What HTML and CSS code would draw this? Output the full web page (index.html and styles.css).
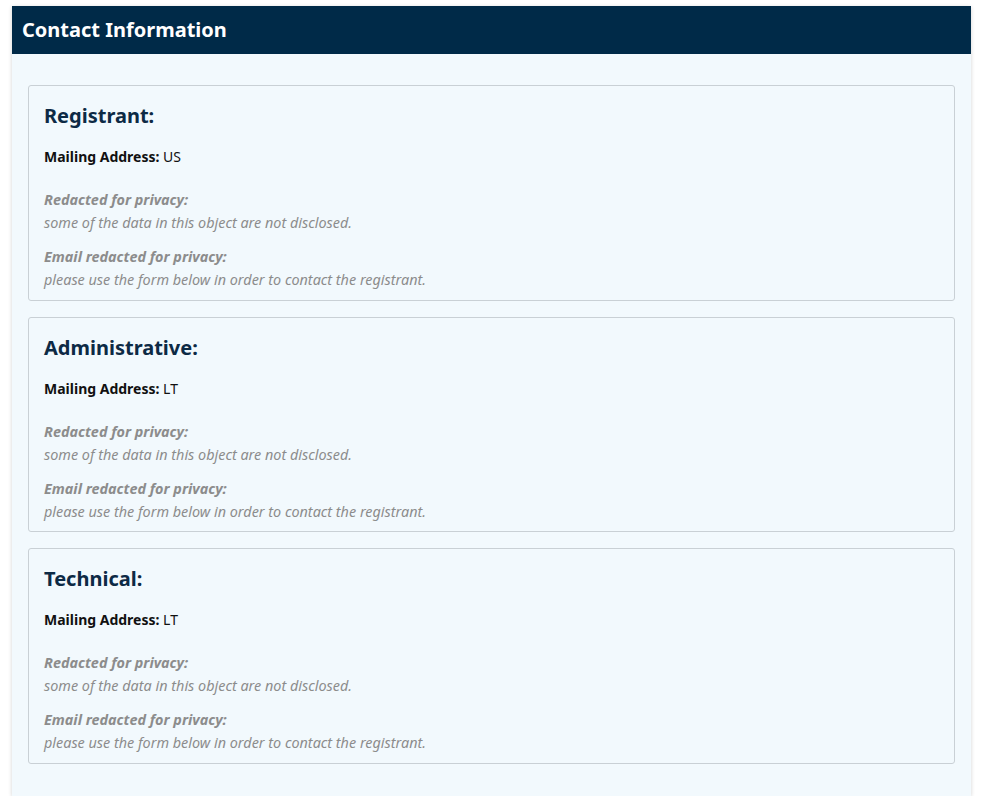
FILE: index.html
```html
<!DOCTYPE html>
<html>
<head lang="en">
  <meta charset="UTF-8">
  <title>Contact Information</title>
  <link rel="stylesheet" href="styles.css">
</head>
<body>
  <div class="panel">
    <div class="panelHeader">Contact Information</div>
    <div class="panelBody">
      <div class="contact">
        <h3 class="contactTitle">Registrant:</h3>
        <p class="contactAddress"><b>Mailing Address:</b> US</p>
        <div class="redacted">
          <p class="redactedLabel">Redacted for privacy:</p>
          <p class="redactedText">some of the data in this object are not disclosed.</p>
        </div>
        <div class="redacted">
          <p class="redactedLabel">Email redacted for privacy:</p>
          <p class="redactedText">please use the form below in order to contact the registrant.</p>
        </div>
      </div>
      <div class="contact">
        <h3 class="contactTitle">Administrative:</h3>
        <p class="contactAddress"><b>Mailing Address:</b> LT</p>
        <div class="redacted">
          <p class="redactedLabel">Redacted for privacy:</p>
          <p class="redactedText">some of the data in this object are not disclosed.</p>
        </div>
        <div class="redacted">
          <p class="redactedLabel">Email redacted for privacy:</p>
          <p class="redactedText">please use the form below in order to contact the registrant.</p>
        </div>
      </div>
      <div class="contact">
        <h3 class="contactTitle">Technical:</h3>
        <p class="contactAddress"><b>Mailing Address:</b> LT</p>
        <div class="redacted">
          <p class="redactedLabel">Redacted for privacy:</p>
          <p class="redactedText">some of the data in this object are not disclosed.</p>
        </div>
        <div class="redacted">
          <p class="redactedLabel">Email redacted for privacy:</p>
          <p class="redactedText">please use the form below in order to contact the registrant.</p>
        </div>
      </div>
    </div>
  </div>
</body>
</html>
```

FILE: styles.css
```css
body {
  margin: 0;
  padding: 6px 15px 0 12px;
  background: #fff;
  font-family: "Noto Sans", sans-serif;
}
.panel {
  background: #f2f9fd;
  box-shadow: 0 1px 4px rgba(0, 0, 0, 0.18);
}
.panelHeader {
  background: #002a48;
  color: #fff;
  font-weight: bold;
  font-size: 20px;
  height: 48px;
  line-height: 48px;
  padding-left: 10px;
}
.panelBody {
  padding: 31px 16px 32px 16px;
  display: flex;
  flex-direction: column;
  gap: 16px;
}
.contact {
  border: 1px solid #c9d0d5;
  border-radius: 3px;
  padding: 16px 15px 8.5px 15px;
}
.contactTitle {
  margin: 0 0 16px 0;
  font-size: 20px;
  line-height: 28px;
  color: #0d2a45;
}
.contactAddress {
  margin: 0 0 20px 0;
  font-size: 14px;
  line-height: 22px;
  color: #111;
}
.redacted {
  margin-bottom: 11px;
}
.redacted:last-child {
  margin-bottom: 0;
}
.redacted p {
  margin: 0;
  font-size: 14.4px;
  line-height: 23px;
  font-style: italic;
  color: #8c8c8c;
}
.redactedLabel {
  font-weight: bold;
}
```
